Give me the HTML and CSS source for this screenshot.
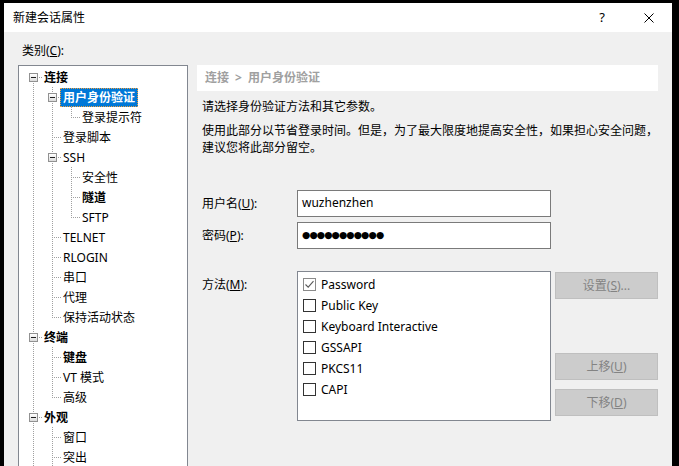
FILE: index.html
```html
<!DOCTYPE html>
<html lang="zh-CN">
<head>
<meta charset="utf-8">
<title>新建会话属性</title>
<link rel="stylesheet" href="styles.css">
</head>
<body>
<div class="window">
  <div class="titlebar">
    <span class="title">新建会话属性</span>
    <span class="tbtn help">?</span>
    <span class="tbtn close"><svg width="10" height="10" viewBox="0 0 10 10"><path d="M0.5 0.5L9.5 9.5M9.5 0.5L0.5 9.5" stroke="#000" stroke-width="1" fill="none"/></svg></span>
  </div>
  <div class="body">
    <div class="left">
      <div class="cat-label">类别(<u>C</u>):</div>
      <div class="tree">
        <div class="row"><span class="c bx first"><span class="box"></span></span><span class="lbl b">连接</span></div>
        <div class="row"><span class="g v"></span><span class="c bx mid"><span class="box"></span></span><span class="lbl b sel">用户身份验证</span></div>
        <div class="row"><span class="g v"></span><span class="g v"></span><span class="c last"></span><span class="lbl">登录提示符</span></div>
        <div class="row"><span class="g v"></span><span class="c mid"></span><span class="lbl">登录脚本</span></div>
        <div class="row"><span class="g v"></span><span class="c bx mid"><span class="box"></span></span><span class="lbl">SSH</span></div>
        <div class="row"><span class="g v"></span><span class="g v"></span><span class="c mid"></span><span class="lbl">安全性</span></div>
        <div class="row"><span class="g v"></span><span class="g v"></span><span class="c mid"></span><span class="lbl b">隧道</span></div>
        <div class="row"><span class="g v"></span><span class="g v"></span><span class="c last"></span><span class="lbl">SFTP</span></div>
        <div class="row"><span class="g v"></span><span class="c mid"></span><span class="lbl">TELNET</span></div>
        <div class="row"><span class="g v"></span><span class="c mid"></span><span class="lbl">RLOGIN</span></div>
        <div class="row"><span class="g v"></span><span class="c mid"></span><span class="lbl">串口</span></div>
        <div class="row"><span class="g v"></span><span class="c mid"></span><span class="lbl">代理</span></div>
        <div class="row"><span class="g v"></span><span class="c last"></span><span class="lbl">保持活动状态</span></div>
        <div class="row"><span class="c bx mid"><span class="box"></span></span><span class="lbl b">终端</span></div>
        <div class="row"><span class="g v"></span><span class="c mid"></span><span class="lbl b">键盘</span></div>
        <div class="row"><span class="g v"></span><span class="c mid"></span><span class="lbl">VT 模式</span></div>
        <div class="row"><span class="g v"></span><span class="c last"></span><span class="lbl">高级</span></div>
        <div class="row"><span class="c bx mid"><span class="box"></span></span><span class="lbl b">外观</span></div>
        <div class="row"><span class="g v"></span><span class="c mid"></span><span class="lbl">窗口</span></div>
        <div class="row"><span class="g v"></span><span class="c mid"></span><span class="lbl">突出</span></div>
      </div>
    </div>
    <div class="right">
      <div class="crumb">连接 &gt; 用户身份验证</div>
      <p class="p1">请选择身份验证方法和其它参数。</p>
      <p class="p2">使用此部分以节省登录时间。但是，为了最大限度地提高安全性，如果担心安全问题，<br>建议您将此部分留空。</p>
      <div class="frow first">
        <span class="flabel">用户名(<u>U</u>):</span>
        <div class="input">wuzhenzhen</div>
      </div>
      <div class="frow">
        <span class="flabel">密码(<u>P</u>):</span>
        <div class="input pw">●●●●●●●●●●●</div>
      </div>
      <div class="mrow">
        <span class="flabel mlabel">方法(<u>M</u>):</span>
        <div class="list">
          <div class="item"><span class="cb on"><svg width="11" height="11" viewBox="0 0 11 11"><path d="M1.5 5.5L4.2 8.2L9.5 2.2" stroke="#5a5a5a" stroke-width="1.1" fill="none"/></svg></span>Password</div>
          <div class="item"><span class="cb"></span>Public Key</div>
          <div class="item"><span class="cb"></span>Keyboard Interactive</div>
          <div class="item"><span class="cb"></span>GSSAPI</div>
          <div class="item"><span class="cb"></span>PKCS11</div>
          <div class="item"><span class="cb"></span>CAPI</div>
        </div>
        <div class="btns">
          <div class="btn">设置(<u>S</u>)...</div>
          <div class="btn up">上移(<u>U</u>)</div>
          <div class="btn down">下移(<u>D</u>)</div>
        </div>
      </div>
    </div>
  </div>
</div>
</body>
</html>
```
FILE: styles.css
```css
html, body {
  margin: 0;
  padding: 0;
  background: #000;
  height: 100%;
  overflow: hidden;
}
body {
  font-family: "Noto Sans", "Noto Sans CJK SC", sans-serif;
  font-size: 12px;
  line-height: 17px;
  color: #000;
}
.window {
  margin: 3px 0 0 4px;
  width: 668px;
  height: 463px;
  background: #f0f0f0;
  display: flex;
  flex-direction: column;
  overflow: hidden;
}
.titlebar {
  height: 29px;
  flex: none;
  background: #fff;
  display: flex;
  align-items: center;
  padding-left: 9px;
}
.title {
  flex: 1;
  line-height: 29px;
}
.tbtn {
  height: 29px;
  display: flex;
  align-items: center;
  justify-content: center;
}
.help {
  font-size: 13px;
  width: 36px;
  padding-right: 6px;
}
.close {
  width: 46px;
}
.body {
  flex: 1;
  display: flex;
  padding: 0 14px 0 14px;
  min-height: 0;
}
.left {
  width: 170px;
  flex: none;
  display: flex;
  flex-direction: column;
}
.cat-label {
  padding-top: 10px;
  margin-left: 4px;
  margin-bottom: 6px;
}
.tree {
  flex: 1;
  background: #fff;
  border: 1px solid #828790;
  border-bottom: none;
  padding: 1px 0 0 5px;
  overflow: hidden;
}
.row {
  display: flex;
  align-items: center;
  height: 20px;
}
.g, .c {
  width: 19px;
  height: 20px;
  flex: none;
  display: flex;
  align-items: center;
}
.g.v {
  background: repeating-linear-gradient(#a0a0a0 0 1px, transparent 1px 2px) 9px 0 / 1px 20px no-repeat;
}
.c.mid {
  background:
    repeating-linear-gradient(90deg, #a0a0a0 0 1px, transparent 1px 2px) 11px 10px / 8px 1px no-repeat,
    repeating-linear-gradient(#a0a0a0 0 1px, transparent 1px 2px) 9px 0 / 1px 20px no-repeat;
}
.c.last {
  background:
    repeating-linear-gradient(90deg, #a0a0a0 0 1px, transparent 1px 2px) 11px 10px / 8px 1px no-repeat,
    repeating-linear-gradient(#a0a0a0 0 1px, transparent 1px 2px) 9px 0 / 1px 11px no-repeat;
}
.c.first {
  background:
    repeating-linear-gradient(90deg, #a0a0a0 0 1px, transparent 1px 2px) 11px 10px / 8px 1px no-repeat,
    repeating-linear-gradient(#a0a0a0 0 1px, transparent 1px 2px) 9px 10px / 1px 10px no-repeat;
}
.box {
  width: 9px;
  height: 9px;
  box-sizing: border-box;
  margin-left: 5px;
  border: 1px solid #919191;
  background:
    linear-gradient(#1e1e1e, #1e1e1e) 1px 3px / 5px 1px no-repeat,
    linear-gradient(#ffffff, #dcdcdc);
}
.lbl {
  margin-left: -2px;
  padding: 0 2px;
  border: 1px solid transparent;
  line-height: 17px;
  white-space: nowrap;
}
.lbl.b {
  font-weight: bold;
}
.lbl.sel {
  background: #0078d7;
  color: #fff;
  border: 1px dotted #f0a040;
}
.right {
  flex: 1;
  margin-left: 9px;
  padding-top: 33px;
}
.crumb {
  background: #fff;
  height: 26px;
  line-height: 26px;
  padding-left: 8px;
  color: #a0a0a0;
  font-weight: bold;
  word-spacing: 3px;
}
.p1, .p2 {
  margin: 7px 0 0 5px;
}
.p2 {
  white-space: nowrap;
}
.frow {
  display: flex;
  align-items: center;
  margin-top: 5px;
  margin-left: 5px;
}
.frow.first {
  margin-top: 34px;
}
.flabel {
  width: 95px;
  flex: none;
}
.input {
  width: 254px;
  height: 27px;
  box-sizing: border-box;
  border: 1px solid #7a7a7a;
  background: #fff;
  padding-left: 4px;
  line-height: 23px;
}
.input.pw {
  font-family: "DejaVu Sans", sans-serif;
  font-size: 9.5px;
  letter-spacing: -0.9px;
  line-height: 24px;
}
.mrow {
  display: flex;
  align-items: flex-start;
  margin-top: 22px;
  margin-left: 5px;
}
.mlabel {
  padding-top: 5px;
}
.list {
  width: 254px;
  height: 150px;
  box-sizing: border-box;
  border: 1px solid #828790;
  background: #fff;
  padding: 2px 0 0 5px;
}
.item {
  height: 21px;
  display: flex;
  align-items: center;
}
.cb {
  width: 13px;
  height: 13px;
  box-sizing: border-box;
  border: 1px solid #333;
  background: #fff;
  margin-right: 5px;
  display: flex;
  align-items: center;
  justify-content: center;
}
.cb.on {
  border-color: #8a8a8a;
}
.btns {
  margin-left: 4px;
  margin-top: 1px;
  display: flex;
  flex-direction: column;
}
.btn {
  width: 103px;
  height: 27px;
  box-sizing: border-box;
  background: #cccccc;
  border: 1px solid #bfbfbf;
  color: #838383;
  text-align: center;
  line-height: 25px;
}
.btn.up {
  margin-top: 54px;
}
.btn.down {
  margin-top: 9px;
}
```
